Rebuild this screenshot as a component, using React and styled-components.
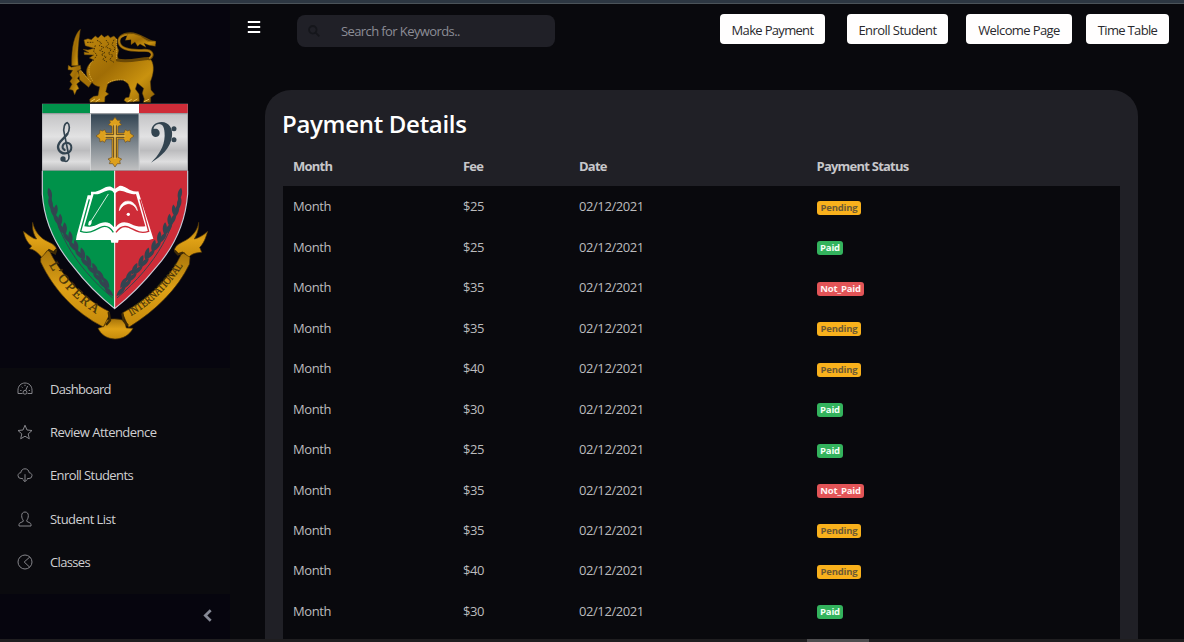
import React from "react";
import styled, { createGlobalStyle } from "styled-components";

const GlobalStyle = createGlobalStyle`
  * { box-sizing: border-box; }
  body {
    margin: 0;
    background: #09090d;
    overflow: hidden;
    font-family: "Open Sans", "Noto Sans", sans-serif;
    font-size: 13px;
  }
`;

const Page = styled.div`
  display: flex;
  flex-direction: column;
  width: 1184px;
  height: 642px;
  overflow: hidden;
  background: #09090d;
`;

const WindowEdge = styled.div`
  flex: none;
  height: 4px;
  background: #2d3742;
  border-bottom: 1px solid #4b5359;
`;

const Columns = styled.div`
  flex: 1;
  min-height: 0;
  display: flex;
`;

const ScrollTrack = styled.div`
  flex: none;
  height: 3px;
  padding-left: 807px;
  background: #1f1e20;
`;

const ScrollThumb = styled.div`
  width: 62px;
  height: 3px;
  background: #4e4d4f;
`;

const Sidebar = styled.aside`
  flex: none;
  display: flex;
  flex-direction: column;
  width: 230px;
  background: #0a0a0e;
`;

const Brand = styled.div`
  height: 364px;
  background: #06050e;
  svg { display: block; }
`;

const Nav = styled.nav`
  flex: 1;
  display: flex;
  flex-direction: column;
`;

const NavItem = styled.a`
  display: flex;
  align-items: center;
  height: 43.2px;
  padding: 0 0 1px 17px;
  gap: 17px;
  color: #d0d0d2;
  letter-spacing: ${(p) => p.$spacing}px;
  svg { flex: none; }
`;

const Minimizer = styled.div`
  display: flex;
  align-items: center;
  justify-content: flex-end;
  height: 45px;
  padding: 0 18px 2px 0;
  background: #06050e;
`;

const Main = styled.main`
  flex: 1;
  min-width: 0;
  display: flex;
  flex-direction: column;
`;

const Header = styled.header`
  flex: none;
  display: flex;
  align-items: flex-start;
  height: 86px;
  padding: 10px 15px 0 17px;
`;

const MenuButton = styled.div`
  width: 14px;
  height: 26px;
  display: flex;
  align-items: center;
`;

const Search = styled.div`
  display: flex;
  align-items: center;
  width: 258px;
  height: 32px;
  margin: 1px 165px 0 36px;
  padding-left: 11px;
  gap: 21px;
  border-radius: 8px;
  background: #202027;
  color: #8c8d96;
  letter-spacing: -0.6px;
`;

const ActionButton = styled.div`
  display: flex;
  align-items: center;
  justify-content: center;
  width: ${(p) => p.$width}px;
  height: 30px;
  margin-left: ${(p) => p.$gap}px;
  padding-top: 2px;
  border-radius: 4px;
  background: #fffefe;
  color: #29292d;
  white-space: nowrap;
  letter-spacing: ${(p) => p.$spacing}px;
`;

const Card = styled.section`
  flex: 1;
  min-height: 0;
  width: 873px;
  margin-left: 35px;
  padding: 17px 18px 0;
  border-radius: 26px 26px 0 0;
  background: #202026;
  overflow: hidden;
`;

const Title = styled.h1`
  margin: 0 0 0 -1px;
  height: 39px;
  color: #fff;
  font-size: 24px;
  line-height: 34px;
  font-weight: 600;
  letter-spacing: -0.3px;
`;

const Row = styled.div`
  display: grid;
  grid-template-columns: 170px 116px 237.5px 1fr;
  align-items: center;
  height: 40.48px;
  padding-left: 10px;
  color: #bcbcbe;
  letter-spacing: -0.42px;
`;

const HeadRow = styled(Row)`
  height: 40px;
  padding-bottom: 1px;
  color: #c7c7ca;
  font-weight: 700;
  letter-spacing: -0.77px;
`;

const Body = styled.div`
  background: #09090d;
`;

const tones = {
  Pending: ["#f9b11c", "#6d5a34"],
  Paid: ["#33b35d", "#f4fff7"],
  Not_Paid: ["#e25457", "#fff3f3"],
};

const Badge = styled.span`
  justify-self: start;
  height: 14px;
  width: ${(p) => p.$width}px;
  margin: 3px 0 0 0.5px;
  border-radius: 3px;
  text-align: center;
  background: ${(p) => tones[p.$status][0]};
  color: ${(p) => tones[p.$status][1]};
  font-size: 9.5px;
  line-height: 14px;
  font-weight: 700;
  letter-spacing: -0.2px;
`;

const badgeWidths = { Pending: 44, Paid: 26, Not_Paid: 47 };

const payments = [
  ["$25", "Pending"],
  ["$25", "Paid"],
  ["$35", "Not_Paid"],
  ["$35", "Pending"],
  ["$40", "Pending"],
  ["$30", "Paid"],
  ["$25", "Paid"],
  ["$35", "Not_Paid"],
  ["$35", "Pending"],
  ["$40", "Pending"],
  ["$30", "Paid"],
];

function NavIcon({ children }) {
  return (
    <svg width="16" height="16" viewBox="0 0 16 16" fill="none" stroke="#85858a" strokeWidth="1" strokeLinejoin="round">
      {children}
    </svg>
  );
}

const navItems = [
  {
    label: "Dashboard",
    spacing: -0.7,
    icon: (
      <>
        <path d="M1 12.5V9.2C1 5 4 2 8 2s7 3 7 7.2v3.3h-4.4M1 12.5h4.6" />
        <circle cx="8" cy="11.3" r="1.9" />
        <path d="M8.6 9.5 10.6 5M3.2 9.5h1.3M4.6 5.7l.9.9M8 3.8v1.3M11.7 9.5h1.3" />
      </>
    ),
  },
  {
    label: "Review Attendence",
    spacing: -0.52,
    icon: <path d="M8 1.2 10 6l5 .5-3.8 3.4 1.1 4.9L8 12.2l-4.3 2.6 1.1-4.9L1 6.5 6 6Z" />,
  },
  {
    label: "Enroll Students",
    spacing: -0.6,
    icon: (
      <>
        <path d="M5.8 11.5H4A3 3 0 0 1 1 8.6C1 7 2.2 5.8 3.8 5.7 4.2 3.2 5.7 1.8 8 1.8s3.8 1.4 4.2 3.9C13.8 5.8 15 7 15 8.6a3 3 0 0 1-3 2.9h-1.8" />
        <path d="M8 7.2v7.2M5.6 12.3 8 14.7l2.4-2.4" />
      </>
    ),
  },
  {
    label: "Student List",
    spacing: -0.55,
    icon: (
      <path d="M8 1C5.8 1 4.7 2.5 4.7 4.5c0 2.2.6 3.7 1.5 4.6v1.3L2.9 12c-.6.3-.9.8-.9 1.5V15h12v-1.5c0-.7-.3-1.2-.9-1.5l-3.3-1.6V9.1c.9-.9 1.5-2.4 1.5-4.6C11.3 2.5 10.2 1 8 1Z" />
    ),
  },
  {
    label: "Classes",
    spacing: -0.65,
    icon: (
      <>
        <circle cx="8" cy="8" r="7" />
        <path d="M12.8 3 7.2 8l5.4 5.1" />
      </>
    ),
  },
];

/* One laurel branch; the right one is its mirror image. */
function Laurel({ mirrored }) {
  const leaves = [
    [149, 72, 80], [151, 100, 78], [158, 122, 76], [166, 122, 100], [169, 148, 66], [180, 150, 92],
    [183, 176, 60], [194, 176, 88], [200, 203, 56], [211, 202, 84], [218, 229, 52], [228, 228, 78],
    [238, 254, 48], [248, 251, 75], [256, 279, 44], [266, 273, 70], [275, 301, 42], [285, 296, 66],
    [293, 323, 42], [302, 317, 62], [310, 344, 42], [318, 338, 60], [326, 365, 46],
  ];
  return (
    <g transform={mirrored ? "translate(689 0) scale(-1 1)" : undefined} fill="#334450">
      <path d="M150 60C160 170 215 280 338 384" fill="none" stroke="#334450" strokeWidth="3" />
      {leaves.map(([x, y, a]) => (
        <path key={`${x}-${y}`} d="M-19 0C-9-9 8-9 19 0 8 7-9 8-19 0Z" transform={`translate(${x} ${y}) rotate(${a})`} />
      ))}
    </g>
  );
}

function Crest() {
  return (
    <svg width="230" height="364" viewBox="0 4 230 364">
      <defs>
        <linearGradient id="gold" x1="0" y1="0" x2="1" y2="1">
          <stop offset="0" stopColor="#c38b0e" />
          <stop offset=".45" stopColor="#a06d05" />
          <stop offset=".75" stopColor="#c9920f" />
          <stop offset="1" stopColor="#8d6005" />
        </linearGradient>
        <linearGradient id="ribbon" x1="0" y1="0" x2="0" y2="1">
          <stop offset="0" stopColor="#a8750a" />
          <stop offset=".5" stopColor="#dfa116" />
          <stop offset="1" stopColor="#c58a0b" />
        </linearGradient>
        <linearGradient id="silver" x1="0" y1="0" x2="0" y2="1">
          <stop offset="0" stopColor="#c4c4c6" />
          <stop offset=".4" stopColor="#e2e2e3" />
          <stop offset=".65" stopColor="#bcbcbe" />
          <stop offset=".85" stopColor="#dededf" />
          <stop offset="1" stopColor="#b9b9bb" />
        </linearGradient>
        <linearGradient id="slate" x1="0" y1="0" x2="0" y2="1">
          <stop offset="0" stopColor="#334553" />
          <stop offset="1" stopColor="#bfc0c1" />
        </linearGradient>
        <path id="left-band" d="M147 284Q198 376 302 440" />
        <path id="right-band" d="M393 438Q482 388 555 277" />
      </defs>

      <g transform="scale(.33333)">
        {/* lion */}
        <g fill="url(#gold)" stroke="#60430a" strokeWidth="1.5">
          <path d="M241 88C224 102 214 139 215 197H235C231 160 236 124 241 88Z" />
          <path d="M205 196 214 202 241 196 243 208 232 213 240 226 232 235 240 244 230 252 237 266 230 270 224 284 219 271 208 268 216 253 210 244 217 234 210 224 218 211 204 209Z" />
          <path d="M252 120 264 116 274 119 286 108 294 114 304 104 313 112 324 106 331 113 342 108 351 118 350 138 356 151 352 168 356 179C390 187 428 177 453 179 465 196 460 225 451 245L453 270 464 283 452 292V307H430L433 297 427 280 431 265 412 249 406 267 417 282 418 304 380 307 372 301 377 293 387 292 392 272 384 251 369 240C351 240 333 243 323 253L317 275 326 282 315 290 314 306 270 307 269 298 281 289 294 287 299 260C287 259 280 253 276 247L266 262 239 239 235 211 243 211 262 232C254 207 265 191 282 180L268 174 281 165 253 164 252 156 267 158 249 148 264 150 282 145 256 137Z" />
        </g>
        <path d="M352 180C390 188 429 173 449 176 464 164 455 151 434 151 399 153 365 151 358 130 353 113 367 101 391 101 421 101 438 124 463 127" fill="none" stroke="#6b4905" strokeWidth="9" strokeLinecap="round" />
        <path d="M449 174C463 163 453 151 434 151 399 153 365 151 358 130 353 113 367 103 391 104 417 106 435 128 464 130" fill="none" stroke="#b57f10" strokeWidth="5" strokeLinecap="round" />
        <path d="M383 102 400 101 422 108 443 124 467 124 466 139 448 136 432 130 438 142 420 132 413 139 405 126 393 134 393 119 376 121Z" fill="url(#gold)" stroke="#634507" />
        <path d="M350 117V177M242 211 272 246M279 182C263 195 263 223 278 242M323 249C339 239 360 237 379 242" fill="none" stroke="#e5b848" strokeWidth="2" strokeDasharray="5 2" />
        <path d="M291 121 305 129 298 137 312 142 299 151 315 158 304 164 319 171 308 178 321 186M318 120 327 132 317 141 334 148 325 161 339 166 329 179 342 187M342 119 336 134 346 145 339 156M261 127H280M286 136 281 154 291 165 283 177" fill="none" stroke="#4b3405" strokeWidth="3" strokeDasharray="5 3" />
        <path d="M272 305 285 297M287 305 300 297M383 305 395 298M400 304 412 297M432 305 447 298" stroke="#eec35b" strokeWidth="3" />

        {/* flag band and emblem panels */}
        <path d="M126 311H564V514H126Z" fill="#9a9da1" />
        <path d="M127 312H270V339H127Z" fill="#00924a" />
        <path d="M270 312H417V339H270Z" fill="#fff" />
        <path d="M417 312H563V339H417Z" fill="#ce2c38" />
        <path d="M127 343H270V510H127Z" fill="url(#silver)" />
        <path d="M273 343H416V510H273Z" fill="url(#slate)" />
        <path d="M419 343H562V510H419Z" fill="url(#silver)" />
        <path d="M271.5 341V511M417.5 341V511" stroke="#f3f3f3" strokeWidth="2" />

        {/* treble clef */}
        <g fill="none" stroke="#334450" strokeLinecap="round" strokeLinejoin="round">
          <path d="M189 480C199 489 208 482 207 469L193 401C188 383 195 369 202 368 210 373 210 390 202 402" strokeWidth="5" />
          <path d="M202 402C190 419 174 424 174 441 175 456 189 463 202 459" strokeWidth="7" />
          <path d="M202 459C218 453 218 431 202 428 187 428 183 444 194 450" strokeWidth="6" />
        </g>
        <circle cx="189" cy="477" r="8" fill="#334450" />

        {/* bass clef */}
        <path d="M454 398C452 377 467 366 485 366 507 367 519 384 516 409 512 445 483 470 453 488 476 465 493 441 494 407 494 383 489 372 477 372 468 373 461 379 461 387 472 384 480 391 479 401 476 414 457 415 454 398Z" fill="#334450" />
        <circle cx="522" cy="386" r="7.5" fill="#334450" />
        <circle cx="522" cy="419" r="7.5" fill="#334450" />

        {/* cross */}
        <path d="M336 399V379L325 374 331 369 329 361 338 361 345 352 352 361 361 361 359 369 365 374 354 379V399H372L376 389 383 393 390 390 391 400 402 408 391 416 390 425 382 423 376 427 371 417H354V472L365 477 359 483 361 491 352 491 345 501 338 491 328 491 331 483 324 477 336 472V417H319L314 427 307 423 300 426 299 416 288 408 299 400 300 390 307 393 314 389 319 399Z" fill="#dda01c" stroke="#6b5025" strokeWidth="2" />
        <path d="M341 376V404H317M349 376V404H373M341 473V412H317M349 473V412H373" fill="none" stroke="#584526" strokeWidth="3" />
        <path d="M345 373V477M314 408H376" stroke="#ead18b" strokeWidth="2" />
      </g>

      <g transform="translate(0 170) scale(.33333)">
        {/* shield */}
        <path d="M127 2H344V416C301 382 252 332 220 290 159 218 132 150 127 72Z" fill="#00924a" />
        <path d="M344 2H563V72C557 150 528 224 470 290 435 333 387 382 344 416Z" fill="#ce2c38" />
        <Laurel />
        <Laurel mirrored />
        <path d="M127 2V72C132 150 159 218 220 290 252 332 301 382 344 416 387 382 435 333 470 290 528 224 557 150 563 72V2" fill="none" stroke="#c8c9d6" strokeWidth="3.5" />
        <path d="M344 2V414" stroke="#fff" strokeWidth="3" />

        {/* open book */}
        <path d="M273 65C299 69 314 45 333 50L344 57 358 48C375 44 389 69 415 64L460 206 447 210H356L354 218H334L332 210H228L230 197 263 76 273 76Z" fill="#fff" />
        <path d="M281 72C304 77 320 53 337 63L342 69V172C325 149 306 157 291 164 276 171 264 171 253 169Z" fill="#00924a" />
        <path d="M347 69C364 51 382 77 408 72L436 169C420 171 407 169 393 162 377 154 359 153 347 172Z" fill="#ce2c38" />
        <path d="M268 88 242 184C270 193 287 179 302 172 321 164 332 174 340 187" fill="none" stroke="#00924a" strokeWidth="4" />
        <path d="M420 88 446 184C418 193 403 179 387 172 368 164 357 174 348 187" fill="none" stroke="#ce2c38" strokeWidth="4" />
        <path d="M325 72 273 154" stroke="#fff" strokeWidth="2.5" />
        <ellipse cx="270" cy="159" rx="4.5" ry="8" fill="#fff" transform="rotate(20 270 159)" />
        <path d="M358 122C361 84 406 84 412 122 399 94 373 94 358 122Z" fill="#fff" stroke="#fff" strokeWidth="2" />
        <circle cx="385" cy="133" r="5" fill="#fff" />

        {/* ribbon */}
        <g fill="url(#ribbon)" stroke="#503707" strokeWidth="2">
          <path d="M98 157C103 181 117 200 136 211 149 218 164 223 169 235L157 248 141 242 127 264C115 249 100 236 88 237L95 228C83 220 74 203 70 184 85 194 98 207 110 207 99 191 96 174 98 157Z" />
          <path d="M596 157C593 181 577 199 557 211 541 219 527 225 523 240L535 253 552 247 565 263C576 249 593 248 605 247L599 232C610 223 618 202 623 184 609 197 596 204 583 207 593 191 597 174 596 157Z" />
          <path d="M318 451C335 444 361 446 373 453L379 474 399 475C388 496 370 506 345 507 319 506 303 493 294 475L312 469Z" />
          <path d="M146 238C179 309 243 382 326 424L328 435 310 471C228 430 161 360 122 276L122 265Z" />
          <path d="M547 247 570 262 568 283C532 357 471 419 386 472L367 429C447 387 511 324 547 247Z" />
        </g>
        <path d="M326 426 330 451 318 465M367 430 371 452 384 467M145 239 165 250 169 238M549 248 534 253 524 242" fill="none" stroke="#3d2a06" strokeWidth="7" />
        <g fontFamily="Liberation Serif, serif" fill="#46330a" stroke="#46330a" strokeWidth=".8">
          <text fontSize="40">
            <textPath href="#left-band" textLength="206">L’OPERA</textPath>
          </text>
          <text fontSize="33">
            <textPath href="#right-band" textLength="220" lengthAdjust="spacingAndGlyphs">INTERNATIONAL</textPath>
          </text>
        </g>
      </g>
    </svg>
  );
}

export default function App() {
  return (
    <Page>
      <GlobalStyle />
      <WindowEdge />
      <Columns>
        <Sidebar>
          <Brand><Crest /></Brand>
          <Nav>
            {navItems.map((item) => (
              <NavItem key={item.label} $spacing={item.spacing}>
                <NavIcon>{item.icon}</NavIcon>
                {item.label}
              </NavItem>
            ))}
          </Nav>
          <Minimizer>
            <svg width="9" height="13" viewBox="0 0 9 13" fill="none" stroke="#868995" strokeWidth="2.7">
              <path d="M7.7 1.2 2.3 6.5l5.4 5.3" />
            </svg>
          </Minimizer>
        </Sidebar>
        <Main>
          <Header>
            <MenuButton>
              <svg width="14" height="12" viewBox="0 0 14 12" stroke="#fff" strokeWidth="2">
                <path d="M.8 1h12.400M.8 6h12.400M.8 11h12.400" />
              </svg>
            </MenuButton>
            <Search>
              <svg width="12" height="12" viewBox="0 0 12 12" fill="none" stroke="#15161b" strokeWidth="1.8">
                <circle cx="4.8" cy="4.8" r="3.8" />
                <path d="m7.6 7.6 3.700 3.700" />
              </svg>
              Search for Keywords..
            </Search>
            <ActionButton $width={105} $gap={0} $spacing={-0.68}>Make Payment</ActionButton>
            <ActionButton $width={101} $gap={22} $spacing={-0.55}>Enroll Student</ActionButton>
            <ActionButton $width={106} $gap={18} $spacing={-0.6}>Welcome Page</ActionButton>
            <ActionButton $width={83} $gap={14} $spacing={-0.68}>Time Table</ActionButton>
          </Header>
          <Card>
            <Title>Payment Details</Title>
            <HeadRow>
              <span>Month</span>
              <span>Fee</span>
              <span>Date</span>
              <span>Payment Status</span>
            </HeadRow>
            <Body>
              {payments.map(([fee, status], i) => (
                <Row key={i}>
                  <span>Month</span>
                  <span>{fee}</span>
                  <span>02/12/2021</span>
                  <Badge $status={status} $width={badgeWidths[status]}>{status}</Badge>
                </Row>
              ))}
              <Row />
            </Body>
          </Card>
        </Main>
      </Columns>
      <ScrollTrack><ScrollThumb /></ScrollTrack>
    </Page>
  );
}
